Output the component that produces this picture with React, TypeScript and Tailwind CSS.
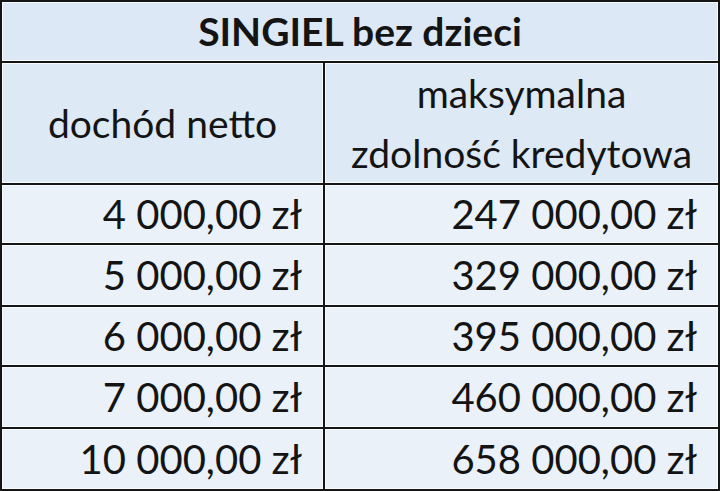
import { Fragment } from "react";

const rows = [
  ["4 000,00 zł", "247 000,00 zł"],
  ["5 000,00 zł", "329 000,00 zł"],
  ["6 000,00 zł", "395 000,00 zł"],
  ["7 000,00 zł", "460 000,00 zł"],
  ["10 000,00 zł", "658 000,00 zł"],
];

const cell = "border border-[#f8fbff] flex items-center";

export default function App() {
  return (
    <div className="w-[720px] h-[491px] bg-white font-['Lato',sans-serif] text-[#141414]">
      <div className="grid grid-cols-[321px_393px] grid-rows-[59px_120px_58px_60px_58px_60px_60px] gap-[2px] p-[2px] bg-[#151515] w-[720px] h-[491px]">
        <div className={`${cell} col-span-2 justify-center bg-[#dce8f5] text-[39px] font-bold leading-none`}>
          SINGIEL bez dzieci
        </div>
        <div className={`${cell} justify-center bg-[#dde9f5] text-[39px]`}>dochód netto</div>
        <div className={`${cell} flex-col justify-center bg-[#dde9f5] text-[39px] leading-[60px] text-center`}>
          <span>maksymalna</span>
          <span>zdolność kredytowa</span>
        </div>
        {rows.map(([a, b]) => (
          <Fragment key={a}>
            <div className={`${cell} justify-end pr-5 bg-[#eaf1f9] text-[40px] leading-none`}>{a}</div>
            <div className={`${cell} justify-end pr-5 bg-[#eaf1f9] text-[40px] leading-none`}>{b}</div>
          </Fragment>
        ))}
      </div>
    </div>
  );
}
